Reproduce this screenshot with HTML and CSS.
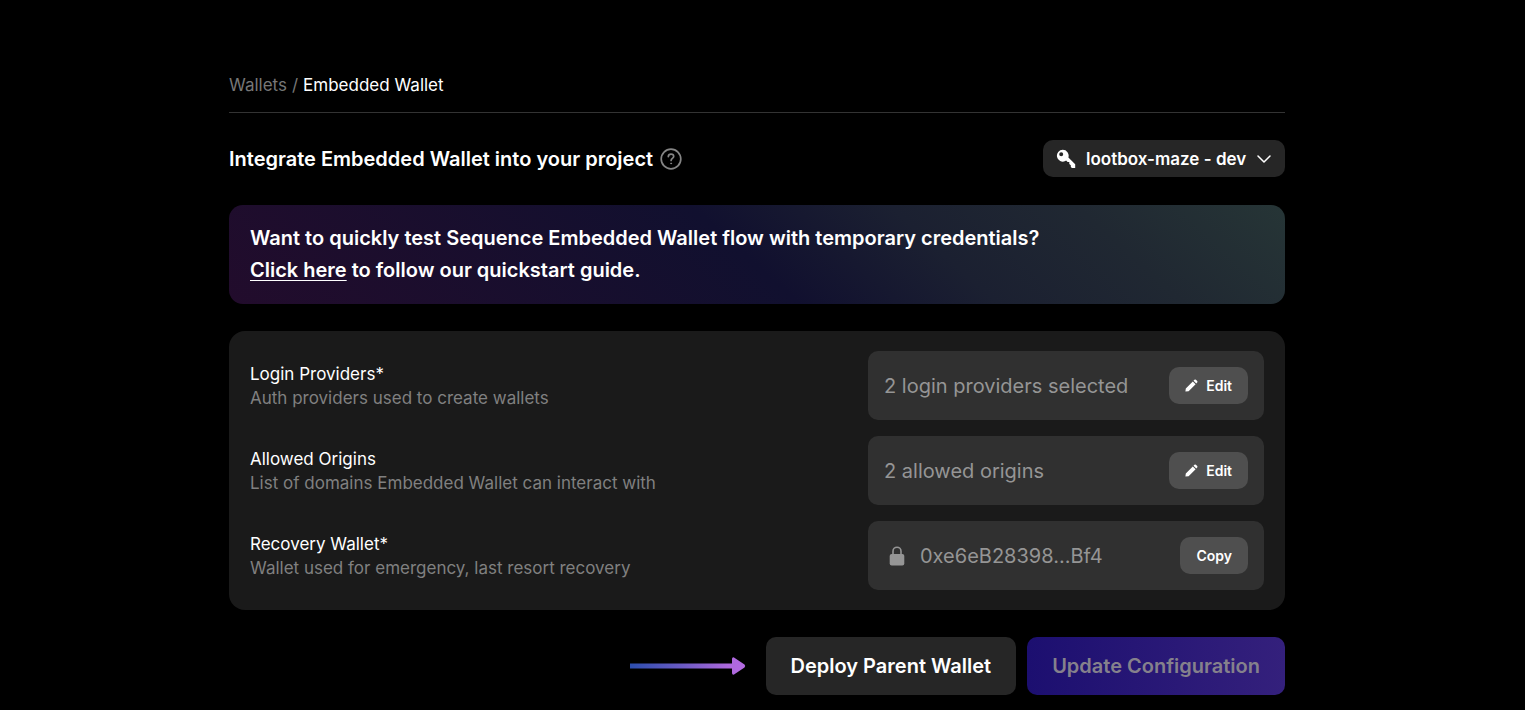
FILE: index.html
```html
<!DOCTYPE html>
<html lang="en">
<head>
<meta charset="utf-8">
<meta name="viewport" content="width=device-width, initial-scale=1">
<title>Embedded Wallet</title>
<link rel="stylesheet" href="styles.css">
</head>
<body>
<main class="page">
  <nav class="breadcrumb" aria-label="Breadcrumb">
    <a class="breadcrumb-link" href="#wallets">Wallets</a>
    <span class="breadcrumb-separator">/</span>
    <span class="breadcrumb-current" aria-current="page">Embedded Wallet</span>
  </nav>

  <header class="heading">
    <h1 class="title">Integrate Embedded Wallet into your project</h1>
    <button class="help" type="button" aria-label="Help">
      <svg width="22" height="22" viewBox="0 0 22 22" fill="none" stroke="currentColor" stroke-width="1.7" stroke-linecap="round" stroke-linejoin="round">
        <circle cx="11" cy="11" r="9.8"/>
        <path d="M8.300 8.600c.1-1.600 1.200-2.500 2.700-2.500s2.700.9 2.700 2.300c0 1.900-2.600 2-2.600 4"/>
        <circle cx="11.1" cy="15.4" r=".5" fill="currentColor" stroke-width="1"/>
      </svg>
    </button>
    <label class="project">
      <svg class="project-key" width="20" height="20" viewBox="0 0 20 20" fill="currentColor" aria-hidden="true">
        <path fill-rule="evenodd" d="M6.800 .8a5.900 5.900 0 1 0 2.400 11.300l.9-.5 1.500 1.500h1.700v1.800l1.500 1.400v1.500l1 1.200h3.400v-3.800l-6.800-6.800A5.900 5.900 0 0 0 6.800 .8ZM5.200 3.300a2 2 0 1 1 0 4 2 2 0 0 1 0-4Z"/>
      </svg>
      <select class="project-select" aria-label="Project">
        <option>lootbox-maze - dev</option>
      </select>
      <svg width="14" height="8" viewBox="0 0 14 8" fill="none" stroke="currentColor" stroke-width="1.5" stroke-linecap="round" stroke-linejoin="round" aria-hidden="true"><path d="M1 1l6 6 6-6"/></svg>
    </label>
  </header>

  <section class="banner">
    <p class="banner-text">Want to quickly test Sequence Embedded Wallet flow with temporary credentials?</p>
    <p class="banner-text"><a class="banner-link" href="#quickstart">Click here</a> to follow our quickstart guide.</p>
  </section>

  <section class="card">
    <div class="row">
      <div class="row-info">
        <h2 class="row-title">Login Providers*</h2>
        <p class="row-note">Auth providers used to create wallets</p>
      </div>
      <div class="field">
        <span class="field-value">2 login providers selected</span>
        <button class="small-button" type="button">
          <svg class="pencil" width="13" height="13" viewBox="0 0 13 13" fill="currentColor" aria-hidden="true"><path d="M.4 12.600l.4-3.200L7.800 2.400l2.800 2.800-7 7zM8.500 1.700l.9-.9q.8-.6 1.500 0l1.300 1.300q.6.700 0 1.500l-.9.900z"/></svg>
          Edit
        </button>
      </div>
    </div>
    <div class="row">
      <div class="row-info">
        <h2 class="row-title">Allowed Origins</h2>
        <p class="row-note">List of domains Embedded Wallet can interact with</p>
      </div>
      <div class="field">
        <span class="field-value">2 allowed origins</span>
        <button class="small-button" type="button">
          <svg class="pencil" width="13" height="13" viewBox="0 0 13 13" fill="currentColor" aria-hidden="true"><path d="M.4 12.600l.4-3.200L7.800 2.400l2.800 2.800-7 7zM8.500 1.700l.9-.9q.8-.6 1.500 0l1.300 1.300q.6.700 0 1.500l-.9.900z"/></svg>
          Edit
        </button>
      </div>
    </div>
    <div class="row">
      <div class="row-info">
        <h2 class="row-title">Recovery Wallet*</h2>
        <p class="row-note">Wallet used for emergency, last resort recovery</p>
      </div>
      <div class="field">
        <svg class="lock" width="16" height="20" viewBox="0 0 16 20" aria-hidden="true"><rect x=".7" y="8" width="14.6" height="11.5" rx="2" fill="currentColor"/><path d="M4 9V5.200a4 4 0 0 1 8 0V9" fill="none" stroke="currentColor" stroke-width="1.6"/></svg>
        <span class="field-value">0xe6eB28398...Bf4</span>
        <button class="small-button" type="button">Copy</button>
      </div>
    </div>
  </section>

  <div class="actions">
    <svg class="arrow" width="116" height="18" viewBox="0 0 116 18" aria-hidden="true">
      <defs><linearGradient id="arrow-fill" x1="0" x2="1"><stop offset="0" stop-color="#2c4eae"/><stop offset=".45" stop-color="#6b5bc4"/><stop offset=".85" stop-color="#ad68dc"/><stop offset="1" stop-color="#b36ae2"/></linearGradient></defs>
      <path fill="url(#arrow-fill)" d="M0 6.500h102V2q0-2 2-1.600l10.500 7.200q1.500 1.400 0 2.800L104 17.600q-2 .4-2-1.600v-4.500H0z"/>
    </svg>
    <button class="action" type="button">Deploy Parent Wallet</button>
    <button class="action action-primary" type="button" disabled>Update Configuration</button>
  </div>
</main>
</body>
</html>
```
FILE: styles.css
```css
* {
  box-sizing: border-box;
}

body {
  margin: 0;
  background: #000;
  color: #fff;
  font-family: Inter, "Liberation Sans", sans-serif;
  font-size: 17px;
}

h1, h2, p {
  margin: 0;
}

button, select {
  border: 0;
  color: inherit;
  font-family: inherit;
}

svg {
  display: block;
  flex: none;
}

.page {
  padding: 73px 240px 15px 229px;
}

.breadcrumb {
  display: flex;
  gap: 5px;
  padding-bottom: 15px;
  border-bottom: 1px solid #333;
  line-height: 24px;
}

.breadcrumb-link {
  color: #777;
  text-decoration: none;
}

.breadcrumb-separator {
  color: #777;
}

.heading {
  display: flex;
  align-items: center;
  margin-top: 27px;
}

.title {
  font-size: 20px;
  font-weight: 600;
  line-height: 28px;
}

.help {
  margin-left: 7px;
  padding: 0;
  background: none;
  color: #858585;
}

.project {
  display: flex;
  align-items: center;
  gap: 10px;
  height: 37px;
  margin-left: auto;
  padding: 0 14px 0 13px;
  border-radius: 10px;
  background: #262626;
}

.project-select {
  appearance: none;
  padding: 0;
  background: none;
  font-size: 17px;
  font-weight: 600;
}

.banner {
  margin-top: 28px;
  padding: 17px 21px 18px;
  border-radius: 14px;
  background: linear-gradient(42deg, #220c2c 0%, #11102f 49%, #1b2031 66%, #202832 82%, #263536 100%);
}

.banner-text {
  font-size: 20px;
  font-weight: 600;
  line-height: 32px;
}

.banner-link {
  color: inherit;
  text-decoration-thickness: 1px;
  text-underline-offset: 3px;
}

.card {
  display: grid;
  gap: 16px;
  margin-top: 27px;
  padding: 20px 21px;
  border-radius: 16px;
  background: #1a1a1a;
}

.row {
  display: flex;
  align-items: center;
  justify-content: space-between;
}

.row-info {
  line-height: 24px;
}

.row-title {
  font-size: 17px;
  font-weight: 400;
}

.row-note {
  color: #808080;
}

.field {
  display: flex;
  align-items: center;
  width: 396px;
  padding: 16px;
  border-radius: 10px;
  background: #303030;
}

.field-value {
  color: #959595;
  font-size: 20px;
}

.lock {
  margin: 0 15px 0 5px;
  color: #959595;
}

.small-button {
  display: flex;
  align-items: center;
  gap: 8px;
  height: 37px;
  margin-left: auto;
  padding: 0 16px;
  border-radius: 10px;
  background: #4f4f4f;
  font-size: 14px;
  font-weight: 600;
}

.actions {
  display: flex;
  align-items: center;
  justify-content: flex-end;
  gap: 11px;
  margin-top: 27px;
}

.arrow {
  margin-right: 9px;
}

.action {
  height: 58px;
  padding: 0 25px;
  border-radius: 10px;
  background: #262626;
  font-size: 20px;
  font-weight: 600;
}

.action-primary {
  background: linear-gradient(90deg, #1c0f70, #34207c);
  color: #85818c;
}
```
